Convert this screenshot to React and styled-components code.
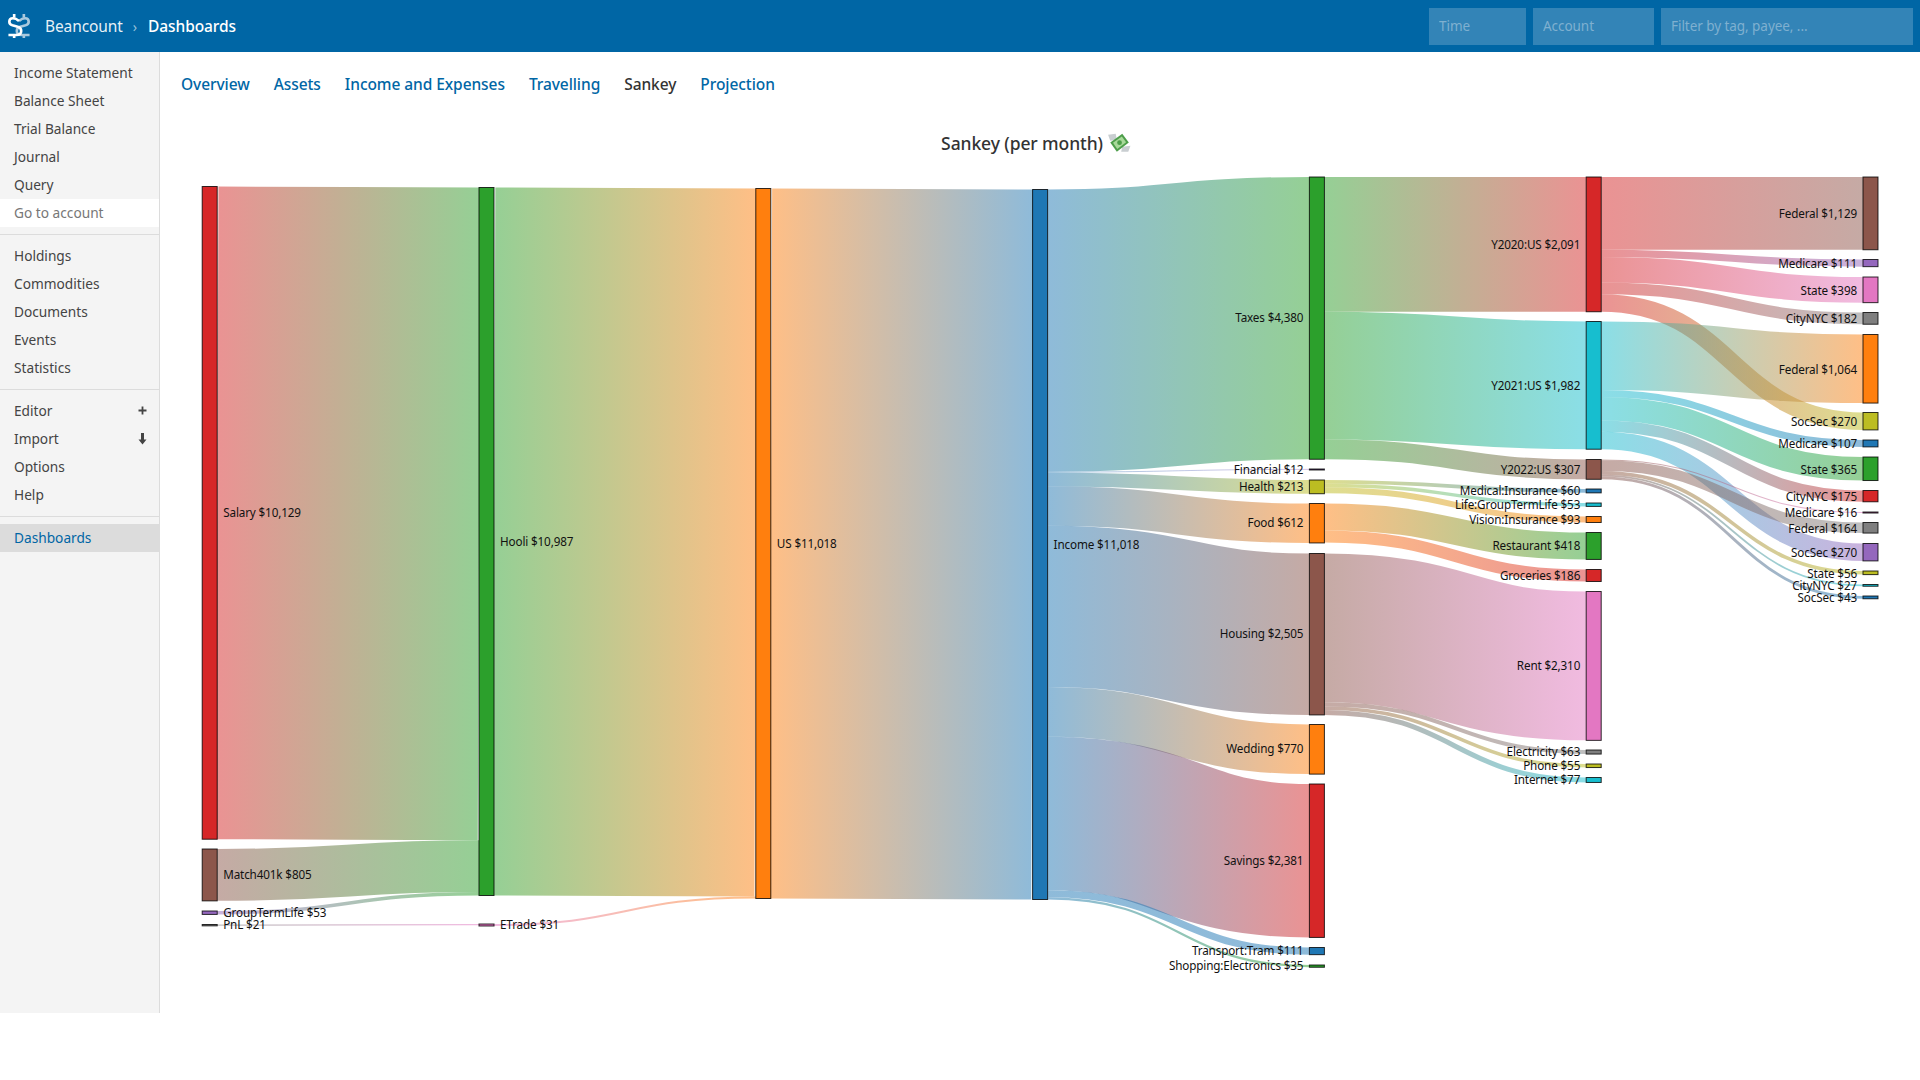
import React from "react";
import styled, { createGlobalStyle } from "styled-components";

const FONT = `"Noto Sans", "Open Sans", "Liberation Sans", sans-serif`;

const Global = createGlobalStyle`
  html, body { margin: 0; padding: 0; background: #fff; }
  body { font-family: ${FONT}; color: #333; }
`;

const Page = styled.div`
  display: flex;
  flex-direction: column;
`;
const Header = styled.header`
  height: 52px;
  background: #0066a5;
  display: flex;
  align-items: center;
  padding: 0 7px 0 8px;
  box-sizing: border-box;
`;
const Logo = styled.svg`
  width: 22px;
  height: 26px;
  margin-right: 15px;
  flex: none;
`;
const Crumb = styled.span`
  font-size: 15.5px;
  letter-spacing: -0.1px;
  color: ${p => (p.$strong ? "#fff" : "rgba(255,255,255,.92)")};
  font-weight: ${p => (p.$strong ? 500 : 400)};
`;
const CrumbSep = styled.span`
  font-size: 14px;
  color: rgba(255,255,255,.6);
  margin: 0 11px 0 10px;
`;
const Filters = styled.div`
  margin-left: auto;
  display: flex;
  gap: 7px;
`;
const Filter = styled.input`
  width: ${p => p.$w}px;
  height: 37px;
  box-sizing: border-box;
  border: 0;
  background: rgba(255,255,255,.2);
  padding: 0 10px;
  font: 400 13.5px ${FONT};
  letter-spacing: -0.05px;
  color: #fff;
  &::placeholder { color: #7fb0d0; opacity: 1; }
`;
const Shell = styled.div`
  display: flex;
  align-items: stretch;
`;
const Sidebar = styled.aside`
  width: 160px;
  flex: none;
  box-sizing: border-box;
  background: #f4f4f4;
  border-right: 1px solid #dcdcdc;
  padding-top: 7px;
`;
const NavGroup = styled.ul`
  list-style: none;
  margin: 0;
  padding: 0 0 7px;
  & + & { border-top: 1px solid #dcdcdc; padding-top: 7px; }
`;
const NavItem = styled.li`
  height: 28px;
  box-sizing: border-box;
  display: flex;
  align-items: center;
  justify-content: space-between;
  padding: 0 14px 1px;
  font-size: 13.7px;
  background: ${p => (p.$active ? "#dcdcdc" : p.$input ? "#fff" : "transparent")};
  color: ${p => (p.$active ? "#0066a5" : p.$input ? "#777" : "#444")};
`;
const NavIcon = styled.svg`
  width: 11px;
  height: 13px;
  flex: none;
  margin-right: -3px;
`;
const Main = styled.main`
  flex: 1;
  min-width: 0;
`;
const Tabs = styled.nav`
  height: 64px;
  display: flex;
  align-items: center;
  gap: 24px;
  padding-left: 21px;
`;
const Tab = styled.span`
  font-size: 15.5px;
  font-weight: 500;
  letter-spacing: -0.07px;
  color: ${p => (p.$current ? "#333" : "#0066a5")};
`;
const Title = styled.h3`
  height: 54px;
  margin: 0;
  padding-right: 8px;
  display: flex;
  align-items: center;
  justify-content: center;
  gap: 4px;
  font-size: 17.5px;
  font-weight: 500;
  letter-spacing: -0.1px;
  color: #333;
`;
const Emoji = styled.svg`
  width: 24px;
  height: 22px;
  flex: none;
`;
const Chart = styled.svg`
  display: block;
  width: 1760px;
  height: 843px;
`;
const NodeRect = styled.rect`
  stroke: #000;
  stroke-opacity: 0.8;
  stroke-width: 1;
`;
const LinkPath = styled.path`
  fill: none;
  stroke-opacity: 0.5;
`;
const Label = styled.text`
  font-family: ${FONT};
  font-size: 11.7px;
  letter-spacing: -0.14px;
  fill: #111;
`;

const C = {
  blue: "#1f77b4", orange: "#ff7f0e", green: "#2ca02c", red: "#d62728", purple: "#9467bd",
  brown: "#8c564b", pink: "#e377c2", gray: "#7f7f7f", olive: "#bcbd22", teal: "#17becf",
};
const K = 0.06444;
const COLX = [202.2, 479, 755.8, 1032.6, 1309.4, 1586.2, 1863];
const W = 15;
const LABEL_DY = ["0.35em", "0.35em", "0.35em", "0.35em", "0.35em", "0.38em", "0.42em"];

const NODES = [
  ["salary", "Salary $10,129", 10129, 0, 186.5, C.red],
  ["match", "Match401k $805", 805, 0, 849, C.brown],
  ["gtl", "GroupTermLife $53", 53, 0, 911, C.purple],
  ["pnl", "PnL $21", 21, 0, 924.5, C.gray],
  ["hooli", "Hooli $10,987", 10987, 1, 187.5, C.green],
  ["etrade", "ETrade $31", 31, 1, 924, C.pink],
  ["us", "US $11,018", 11018, 2, 188.5, C.orange],
  ["income", "Income $11,018", 11018, 3, 189.5, C.blue],
  ["taxes", "Taxes $4,380", 4380, 4, 177, C.green],
  ["financial", "Financial $12", 12, 4, 469, C.purple],
  ["health", "Health $213", 213, 4, 480, C.olive],
  ["food", "Food $612", 612, 4, 503.5, C.orange],
  ["housing", "Housing $2,505", 2505, 4, 553.5, C.brown],
  ["wedding", "Wedding $770", 770, 4, 724.5, C.orange],
  ["savings", "Savings $2,381", 2381, 4, 784, C.red],
  ["tram", "Transport:Tram $111", 111, 4, 947.5, C.blue],
  ["shop", "Shopping:Electronics $35", 35, 4, 965, C.green],
  ["y20", "Y2020:US $2,091", 2091, 5, 177, C.red],
  ["y21", "Y2021:US $1,982", 1982, 5, 321.5, C.teal],
  ["y22", "Y2022:US $307", 307, 5, 459.5, C.brown],
  ["medical", "Medical:Insurance $60", 60, 5, 489, C.blue],
  ["lifegtl", "Life:GroupTermLife $53", 53, 5, 503, C.teal],
  ["vision", "Vision:Insurance $93", 93, 5, 516.5, C.orange],
  ["rest", "Restaurant $418", 418, 5, 532.5, C.green],
  ["groc", "Groceries $186", 186, 5, 569.5, C.red],
  ["rent", "Rent $2,310", 2310, 5, 591.5, C.pink],
  ["elec", "Electricity $63", 63, 5, 750, C.gray],
  ["phone", "Phone $55", 55, 5, 764, C.olive],
  ["net", "Internet $77", 77, 5, 777.5, C.teal],
  ["fed20", "Federal $1,129", 1129, 6, 177, C.brown],
  ["med20", "Medicare $111", 111, 6, 259.5, C.purple],
  ["state20", "State $398", 398, 6, 277, C.pink],
  ["city20", "CityNYC $182", 182, 6, 312.5, C.gray],
  ["fed21", "Federal $1,064", 1064, 6, 334.5, C.orange],
  ["soc20", "SocSec $270", 270, 6, 412.5, C.olive],
  ["med21", "Medicare $107", 107, 6, 440, C.blue],
  ["state21", "State $365", 365, 6, 457, C.green],
  ["city21", "CityNYC $175", 175, 6, 490.5, C.red],
  ["med22", "Medicare $16", 16, 6, 512, C.pink],
  ["fed22", "Federal $164", 164, 6, 522.5, C.gray],
  ["soc21", "SocSec $270", 270, 6, 543.5, C.purple],
  ["state22", "State $56", 56, 6, 571, C.olive],
  ["city22", "CityNYC $27", 27, 6, 584.5, C.teal],
  ["soc22", "SocSec $43", 43, 6, 596, C.blue],
].map(([id, label, value, col, y, color]) => ({ id, label, value, col, y, color, h: Math.max(value * K, 1) }));

const L = [
  ["salary", "hooli", 10129], ["match", "hooli", 805], ["gtl", "hooli", 53], ["pnl", "etrade", 21],
  ["hooli", "us", 10987], ["etrade", "us", 31],
  ["us", "income", 11018],
  ["income", "taxes", 4380], ["income", "financial", 12], ["income", "health", 213], ["income", "food", 612],
  ["income", "housing", 2505], ["income", "wedding", 770], ["income", "savings", 2381], ["income", "tram", 111],
  ["income", "shop", 35],
  ["taxes", "y20", 2091], ["taxes", "y21", 1982], ["taxes", "y22", 307],
  ["health", "medical", 60], ["health", "lifegtl", 53], ["health", "vision", 93],
  ["food", "rest", 418], ["food", "groc", 186],
  ["housing", "rent", 2310], ["housing", "elec", 63], ["housing", "phone", 55], ["housing", "net", 77],
  ["y20", "fed20", 1129], ["y20", "med20", 111], ["y20", "state20", 398], ["y20", "city20", 182], ["y20", "soc20", 270],
  ["y21", "fed21", 1064], ["y21", "med21", 107], ["y21", "state21", 365], ["y21", "city21", 175], ["y21", "soc21", 270],
  ["y22", "med22", 16], ["y22", "fed22", 164], ["y22", "state22", 56], ["y22", "city22", 27], ["y22", "soc22", 43],
];

const byId = Object.fromEntries(NODES.map(n => [n.id, n]));
const LINKS = L.map(([s, t, value], i) => {
  const source = byId[s];
  const target = byId[t];
  return { i, source, target, width: value * K, x0: COLX[source.col] + W, x1: COLX[target.col] };
});
NODES.forEach(n => {
  let a = n.y;
  LINKS.filter(l => l.source === n).sort((p, q) => p.target.y - q.target.y).forEach(l => {
    l.y0 = a + l.width / 2;
    a += l.width;
  });
  let b = n.y;
  LINKS.filter(l => l.target === n).sort((p, q) => p.source.y - q.source.y).forEach(l => {
    l.y1 = b + l.width / 2;
    b += l.width;
  });
});

const linkD = l => {
  const m = (l.x0 + l.x1) / 2;
  return `M${l.x0},${l.y0}C${m},${l.y0} ${m},${l.y1} ${l.x1},${l.y1}`;
};

const NAV = [
  [{ t: "Income Statement" }, { t: "Balance Sheet" }, { t: "Trial Balance" }, { t: "Journal" }, { t: "Query" }, { t: "Go to account", input: true }],
  [{ t: "Holdings" }, { t: "Commodities" }, { t: "Documents" }, { t: "Events" }, { t: "Statistics" }],
  [{ t: "Editor", icon: "plus" }, { t: "Import", icon: "down" }, { t: "Options" }, { t: "Help" }],
  [{ t: "Dashboards", active: true }],
];
const TABS = ["Overview", "Assets", "Income and Expenses", "Travelling", "Sankey", "Projection"];

const SIcon = ({ mirror }) => (
  <g
    transform={mirror ? "translate(25,0) scale(-1,1)" : undefined}
    stroke={mirror ? "#a9c9de" : "#fff"}
    fill="none"
    strokeWidth="3"
  >
    <path d="M7 0.5V5M7 23.5V28" />
    <path d="M0.5 24.5H9.5Q15 24.5 15 20Q15 16 11 15L5 13.5Q1.5 12.5 1.5 9.5Q1.5 5.5 5.5 5.5Q9 5.5 12.5 8.5" />
  </g>
);

export default function App() {
  return (
    <Page>
      <Global />
      <Header>
        <Logo viewBox="0 0 25 28.5">
          <SIcon mirror />
          <SIcon />
        </Logo>
        <Crumb>Beancount</Crumb>
        <CrumbSep>›</CrumbSep>
        <Crumb $strong>Dashboards</Crumb>
        <Filters>
          <Filter $w={97} placeholder="Time" />
          <Filter $w={121} placeholder="Account" />
          <Filter $w={252} placeholder="Filter by tag, payee, ..." />
        </Filters>
      </Header>
      <Shell>
        <Sidebar>
          {NAV.map((group, g) => (
            <NavGroup key={g}>
              {group.map(item => (
                <NavItem key={item.t} $active={item.active} $input={item.input}>
                  {item.t}
                  {item.icon === "plus" && (
                    <NavIcon viewBox="0 0 11 13">
                      <path d="M5.5 2.5v8M1.5 6.5h8" stroke="#444" strokeWidth="1.8" fill="none" />
                    </NavIcon>
                  )}
                  {item.icon === "down" && (
                    <NavIcon viewBox="0 0 11 13">
                      <path d="M4 1h3v6.5h2.5L5.5 12.5 1.5 7.5H4z" fill="#444" />
                    </NavIcon>
                  )}
                </NavItem>
              ))}
            </NavGroup>
          ))}
        </Sidebar>
        <Main>
          <Tabs>
            {TABS.map(t => (
              <Tab key={t} $current={t === "Sankey"}>{t}</Tab>
            ))}
          </Tabs>
          <Title>
            Sankey (per month)
            <Emoji viewBox="0 0 22 20">
              <path d="M1 2.5L8 1.5L9 7L3 8z" fill="#c9ced1" />
              <path d="M14 13.5L21.5 12.5L19.5 18L13 18z" fill="#c9ced1" />
              <path d="M3 9.5L14 1.5L20 9.5L9 18z" fill="#4d9e4a" />
              <path d="M5.5 9.8L13.6 4L17.5 9.3L9.4 15.4z" fill="#a8d99a" />
              <circle cx="11.5" cy="9.7" r="2.2" fill="#4d9e4a" />
            </Emoji>
          </Title>
          <Chart viewBox="160 170 1760 843">
            <defs>
              {LINKS.map(l => (
                <linearGradient
                  key={l.i}
                  id={`lg${l.i}`}
                  gradientUnits="userSpaceOnUse"
                  x1={l.x0}
                  x2={l.x1}
                  y1="0"
                  y2="0"
                >
                  <stop offset="0%" stopColor={l.source.color} />
                  <stop offset="100%" stopColor={l.target.color} />
                </linearGradient>
              ))}
            </defs>
            {LINKS.map(l => (
              <LinkPath key={l.i} d={linkD(l)} stroke={`url(#lg${l.i})`} strokeWidth={l.width} />
            ))}
            {NODES.map(n => (
              <NodeRect key={n.id} x={COLX[n.col]} y={n.y} width={W} height={n.h} fill={n.color} />
            ))}
            {NODES.map(n => (
              <Label
                key={n.id}
                x={n.col < 4 ? COLX[n.col] + W + 6 : COLX[n.col] - 6}
                y={n.y + n.h / 2}
                dy={LABEL_DY[n.col]}
                textAnchor={n.col < 4 ? "start" : "end"}
              >
                {n.label}
              </Label>
            ))}
          </Chart>
        </Main>
      </Shell>
    </Page>
  );
}
